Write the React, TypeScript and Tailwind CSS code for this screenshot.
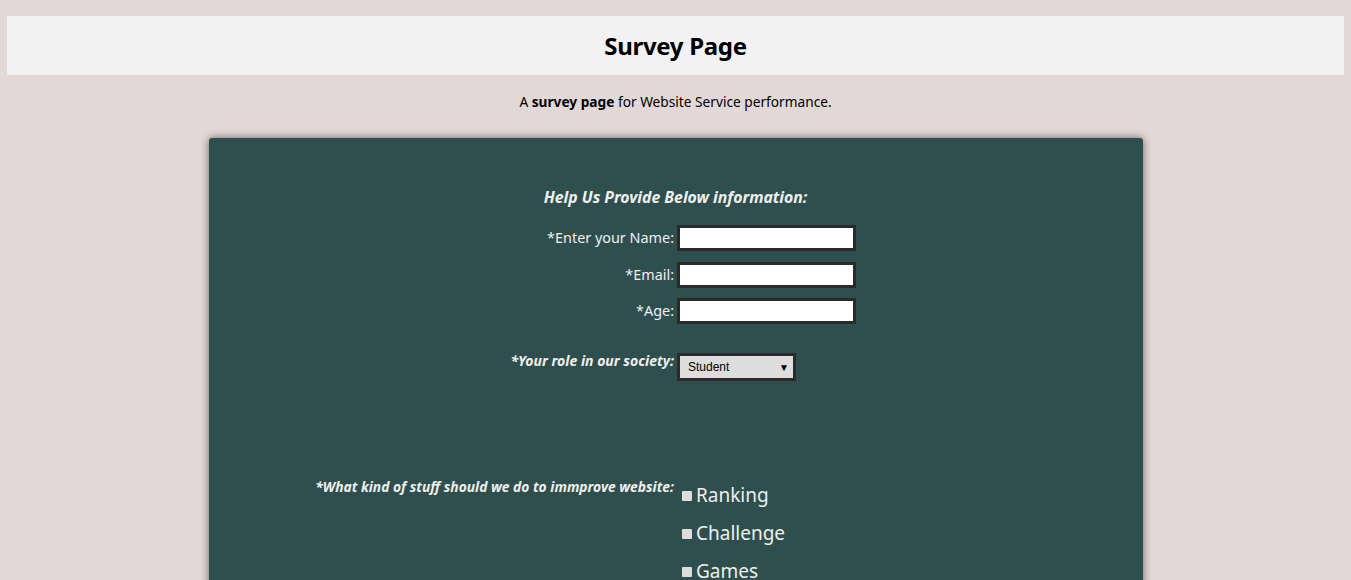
import React from "react";

const font = { fontFamily: '"Noto Sans", "Liberation Sans", sans-serif' };

function Row({ label, children }: { label: string; children: React.ReactNode }) {
  return (
    <div className="grid grid-cols-2 gap-[3px] items-center h-[26px] mb-[10.5px]">
      <label className="text-right text-[14.4px] text-[#eef0f0]">{label}</label>
      <div>{children}</div>
    </div>
  );
}

export default function App() {
  return (
    <div className="min-h-[580px] bg-[#e2d8d7] pt-4 pb-10 overflow-hidden" style={font}>
      <header className="mx-[7px] h-[59px] bg-[#f2f2f2] flex items-center justify-center">
        <h1 className="text-[24px] font-bold text-black tracking-[-0.3px]">Survey Page</h1>
      </header>
      <p className="text-center text-[13.7px] text-black mt-[17px]">
        A <b>survey page</b> for Website Service performance.
      </p>
      <main className="mx-auto mt-[25px] w-[934px] bg-[#2f4f4f] rounded-[3px] shadow-[0_0_8px_rgba(0,0,0,0.55)] pt-[48px] pb-10">
        <h2 className="text-center text-[15.8px] font-bold italic text-[#eef0f0] mb-[16px]">
          Help Us Provide Below information:
        </h2>
        <Row label="*Enter your Name:">
          <div className="w-[179px] h-[26px] bg-white border-[3px] border-[#2a2a2d]" />
        </Row>
        <Row label="*Email:">
          <div className="w-[179px] h-[26px] bg-white border-[3px] border-[#2a2a2d]" />
        </Row>
        <Row label="*Age:">
          <div className="w-[179px] h-[26px] bg-white border-[3px] border-[#2a2a2d]" />
        </Row>
        <div className="grid grid-cols-2 gap-[3px] mt-[29px]">
          <label className="text-right text-[14px] font-bold italic text-[#eef0f0] leading-[20px] -mt-[2px]">
            *Your role in our society:
          </label>
          <div>
            <div
              className="w-[119px] h-[28px] bg-[#dddddd] border-[3px] border-[#2a2a2d] flex items-center justify-between pl-[8px] pr-[4px] text-[12px] text-black"
              style={{ fontFamily: '"Liberation Sans", Arial, sans-serif' }}
            >
              <span>Student</span>
              <span className="text-[10px]">▼</span>
            </div>
          </div>
        </div>
        <div className="grid grid-cols-2 gap-[3px] mt-[96px]">
          <label className="text-right text-[13.8px] font-bold italic text-[#eef0f0] leading-[20px]">
            *What kind of stuff should we do to immprove website:
          </label>
          <div className="pl-[5px] pt-[4px] flex flex-col gap-[10px]">
            {["Ranking", "Challenge", "Games"].map((t) => (
              <div key={t} className="flex items-center h-[28px]">
                <span className="w-[10px] h-[10px] bg-[#dddddd] rounded-[1px] mr-[4px] mt-[2px]" />
                <span className="text-[19px] text-[#eef0f0]">{t}</span>
              </div>
            ))}
          </div>
        </div>
      </main>
    </div>
  );
}
